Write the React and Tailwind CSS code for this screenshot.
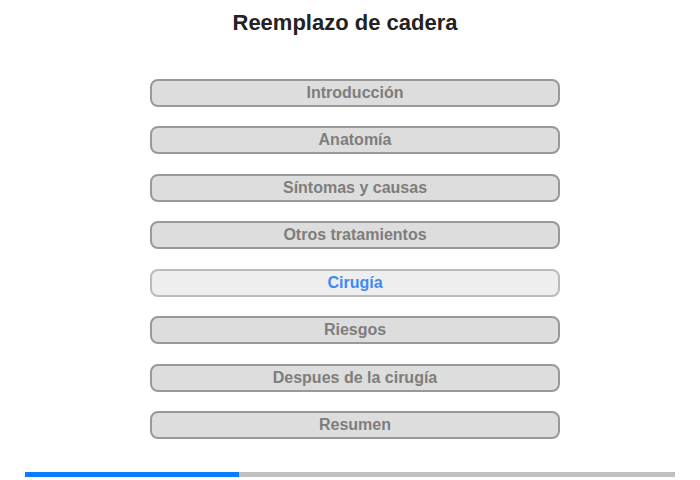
import React from "react";

const items = [
  "Introducción",
  "Anatomía",
  "Síntomas y causas",
  "Otros tratamientos",
  "Cirugía",
  "Riesgos",
  "Despues de la cirugía",
  "Resumen",
];

export default function App() {
  return (
    <div
      className="w-[700px] h-[480px] bg-white flex flex-col overflow-hidden"
      style={{ fontFamily: '"Liberation Sans", Arial, sans-serif' }}
    >
      <h1 className="mt-[10px] h-[26px] leading-[26px] pr-[10px] text-center text-[22px] font-bold text-[#222222]">
        Reemplazo de cadera
      </h1>
      <div className="mt-[43px] ml-[150px] flex flex-col gap-[19.43px]">
        {items.map((t) =>
          t === "Cirugía" ? (
            <div
              key={t}
              className="w-[410px] h-[28px] rounded-[8px] border-2 border-[#bbbbbb] bg-[#eeeeee] flex items-center justify-center text-[16px] font-bold text-[#3d8af7]"
            >
              {t}
            </div>
          ) : (
            <div
              key={t}
              className="w-[410px] h-[28px] rounded-[8px] border-2 border-[#999999] bg-[#dddddd] flex items-center justify-center text-[16px] font-bold text-[#7d7d7d]"
            >
              {t}
            </div>
          )
        )}
      </div>
      <div className="mt-auto mb-[3px] ml-[25px] w-[650px] h-[5px] bg-[#c0c0c0] flex">
        <div className="w-[214px] h-full bg-[#0a7cff]" />
      </div>
    </div>
  );
}
